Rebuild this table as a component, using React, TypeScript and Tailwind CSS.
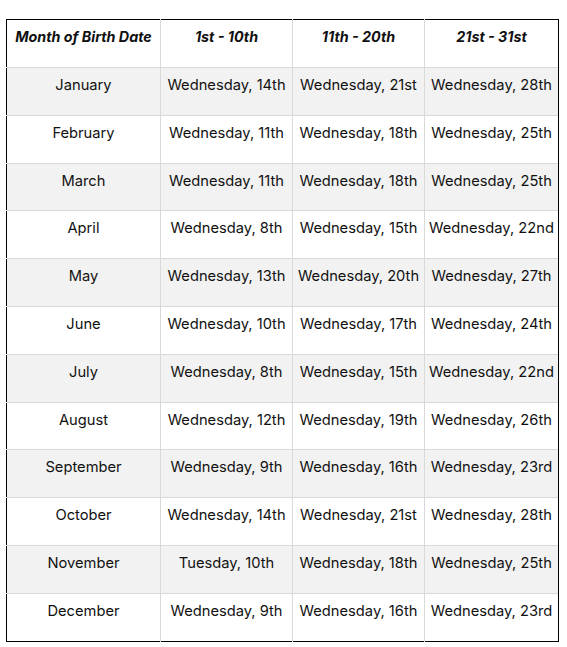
import React from 'react';

const rows: string[][] = [
  ["January", "Wednesday, 14th", "Wednesday, 21st", "Wednesday, 28th"],
  ["February", "Wednesday, 11th", "Wednesday, 18th", "Wednesday, 25th"],
  ["March", "Wednesday, 11th", "Wednesday, 18th", "Wednesday, 25th"],
  ["April", "Wednesday, 8th", "Wednesday, 15th", "Wednesday, 22nd"],
  ["May", "Wednesday, 13th", "Wednesday, 20th", "Wednesday, 27th"],
  ["June", "Wednesday, 10th", "Wednesday, 17th", "Wednesday, 24th"],
  ["July", "Wednesday, 8th", "Wednesday, 15th", "Wednesday, 22nd"],
  ["August", "Wednesday, 12th", "Wednesday, 19th", "Wednesday, 26th"],
  ["September", "Wednesday, 9th", "Wednesday, 16th", "Wednesday, 23rd"],
  ["October", "Wednesday, 14th", "Wednesday, 21st", "Wednesday, 28th"],
  ["November", "Tuesday, 10th", "Wednesday, 18th", "Wednesday, 25th"],
  ["December", "Wednesday, 9th", "Wednesday, 16th", "Wednesday, 23rd"],
];

const headers = ["Month of Birth Date", "1st - 10th", "11th - 20th", "21st - 31st"];

const App = () => {
  return (
    <div className="bg-white w-[567px] h-[647px] pt-[19px] pl-[6px] font-['Inter',sans-serif] text-[#111] text-[14.7px]">
      <table className="w-[552px] border-collapse border border-black table-fixed">
        <colgroup>
          <col className="w-[154px]" />
          <col className="w-[132px]" />
          <col className="w-[132px]" />
          <col className="w-[134px]" />
        </colgroup>
        <thead>
          <tr className="h-[48px]">
            {headers.map((h) => (
              <th
                key={h}
                className="border-r border-[#d9d9d9] last:border-black align-top pt-[7px] font-bold italic text-[14.3px] leading-5 text-center whitespace-nowrap"
              >
                {h}
              </th>
            ))}
          </tr>
        </thead>
        <tbody>
          {rows.map((r, i) => (
            <tr key={r[0]} className={`h-[47.8px] border-t border-[#d9d9d9] ${i % 2 === 0 ? "bg-[#f2f2f2]" : "bg-white"}`}>
              {r.map((c, j) => (
                <td
                  key={j}
                  className="border-r border-[#d9d9d9] last:border-black align-top pt-[7px] leading-5 text-center whitespace-nowrap"
                >
                  {c}
                </td>
              ))}
            </tr>
          ))}
        </tbody>
      </table>
    </div>
  );
};

export default App;
